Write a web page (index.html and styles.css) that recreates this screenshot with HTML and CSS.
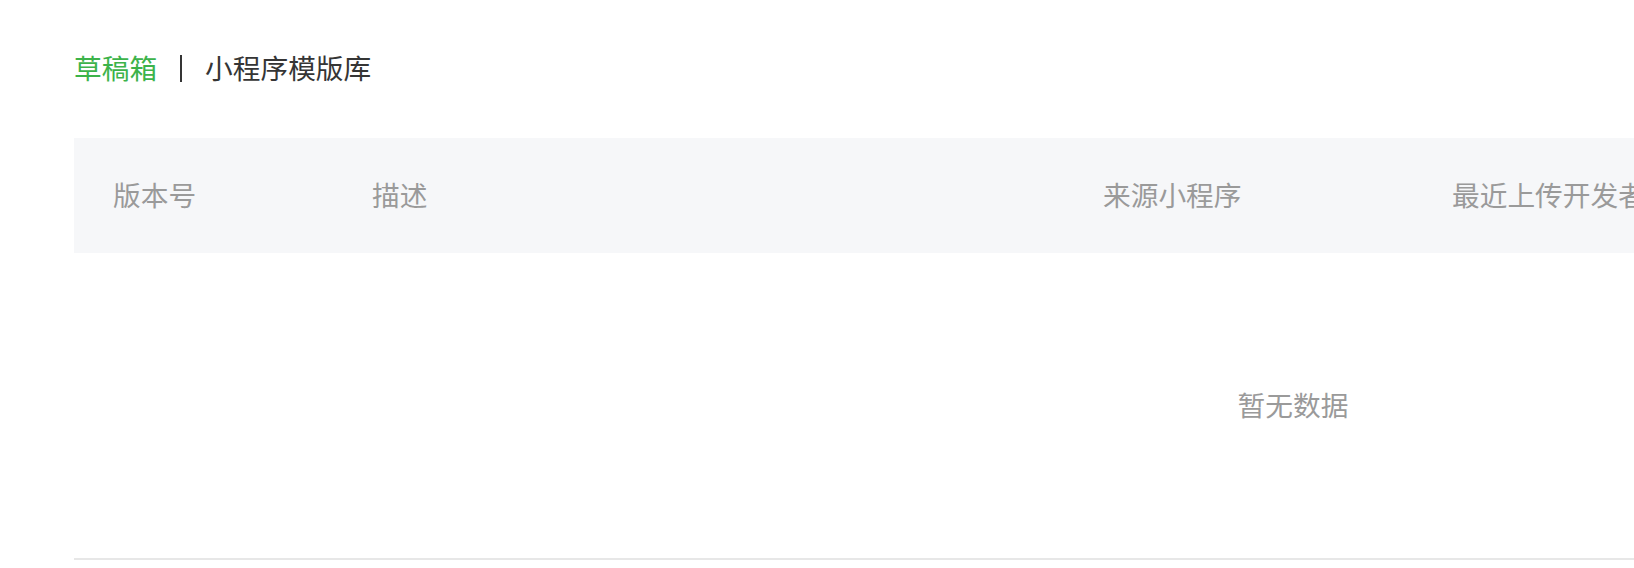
FILE: index.html
```html
<!DOCTYPE html>
<html lang="zh-CN">
<head>
<meta charset="utf-8">
<title>草稿箱</title>
<link rel="stylesheet" href="styles.css">
</head>
<body>
<div class="page">
  <div class="tabs">
    <span class="tab active">草稿箱</span>
    <span class="sep"></span>
    <span class="tab">小程序模版库</span>
  </div>
  <div class="table">
    <div class="thead">
      <div class="th c1">版本号</div>
      <div class="th c2">描述</div>
      <div class="th c3">来源小程序</div>
      <div class="th c4">最近上传开发者</div>
      <div class="th c5">最近上传时间</div>
    </div>
    <div class="empty">暂无数据</div>
  </div>
</div>
</body>
</html>
```
FILE: styles.css
```css
html, body {
  margin: 0;
  padding: 0;
  background: #ffffff;
  overflow: hidden;
}
body {
  font-family: "Noto Sans CJK SC", "Noto Sans", sans-serif;
  width: 1634px;
  height: 568px;
}
.page {
  padding: 0 0 0 74px;
  width: 2438px;
}
.tabs {
  display: flex;
  align-items: center;
  height: 138px;
  box-sizing: border-box;
  margin-top: -1px;
}
.tab {
  font-size: 27.7px;
  line-height: 1;
  color: #353535;
}
.tab.active {
  color: #3cb34a;
}
.sep {
  display: block;
  width: 2px;
  height: 27px;
  background: #353535;
  margin: 0 23px 0 23px;
}
.table {
  margin-top: 1px;
  width: 2438px;
  border-bottom: 2px solid #e7e7e7;
}
.thead {
  display: flex;
  height: 115px;
  align-items: center;
  background: #f6f7f9;
}
.th {
  font-size: 27.7px;
  color: #9a9a9a;
  padding-left: 39px;
  padding-bottom: 4px;
  box-sizing: border-box;
  white-space: nowrap;
}
.c1 { width: 259px; }
.c2 { width: 731px; }
.c3 { width: 349px; }
.c4 { width: 500px; }
.c5 { flex: 1; }
.empty {
  height: 305px;
  padding-bottom: 4px;
  box-sizing: border-box;
  display: flex;
  align-items: center;
  justify-content: center;
  font-size: 27.7px;
  color: #9a9a9a;
}
```
